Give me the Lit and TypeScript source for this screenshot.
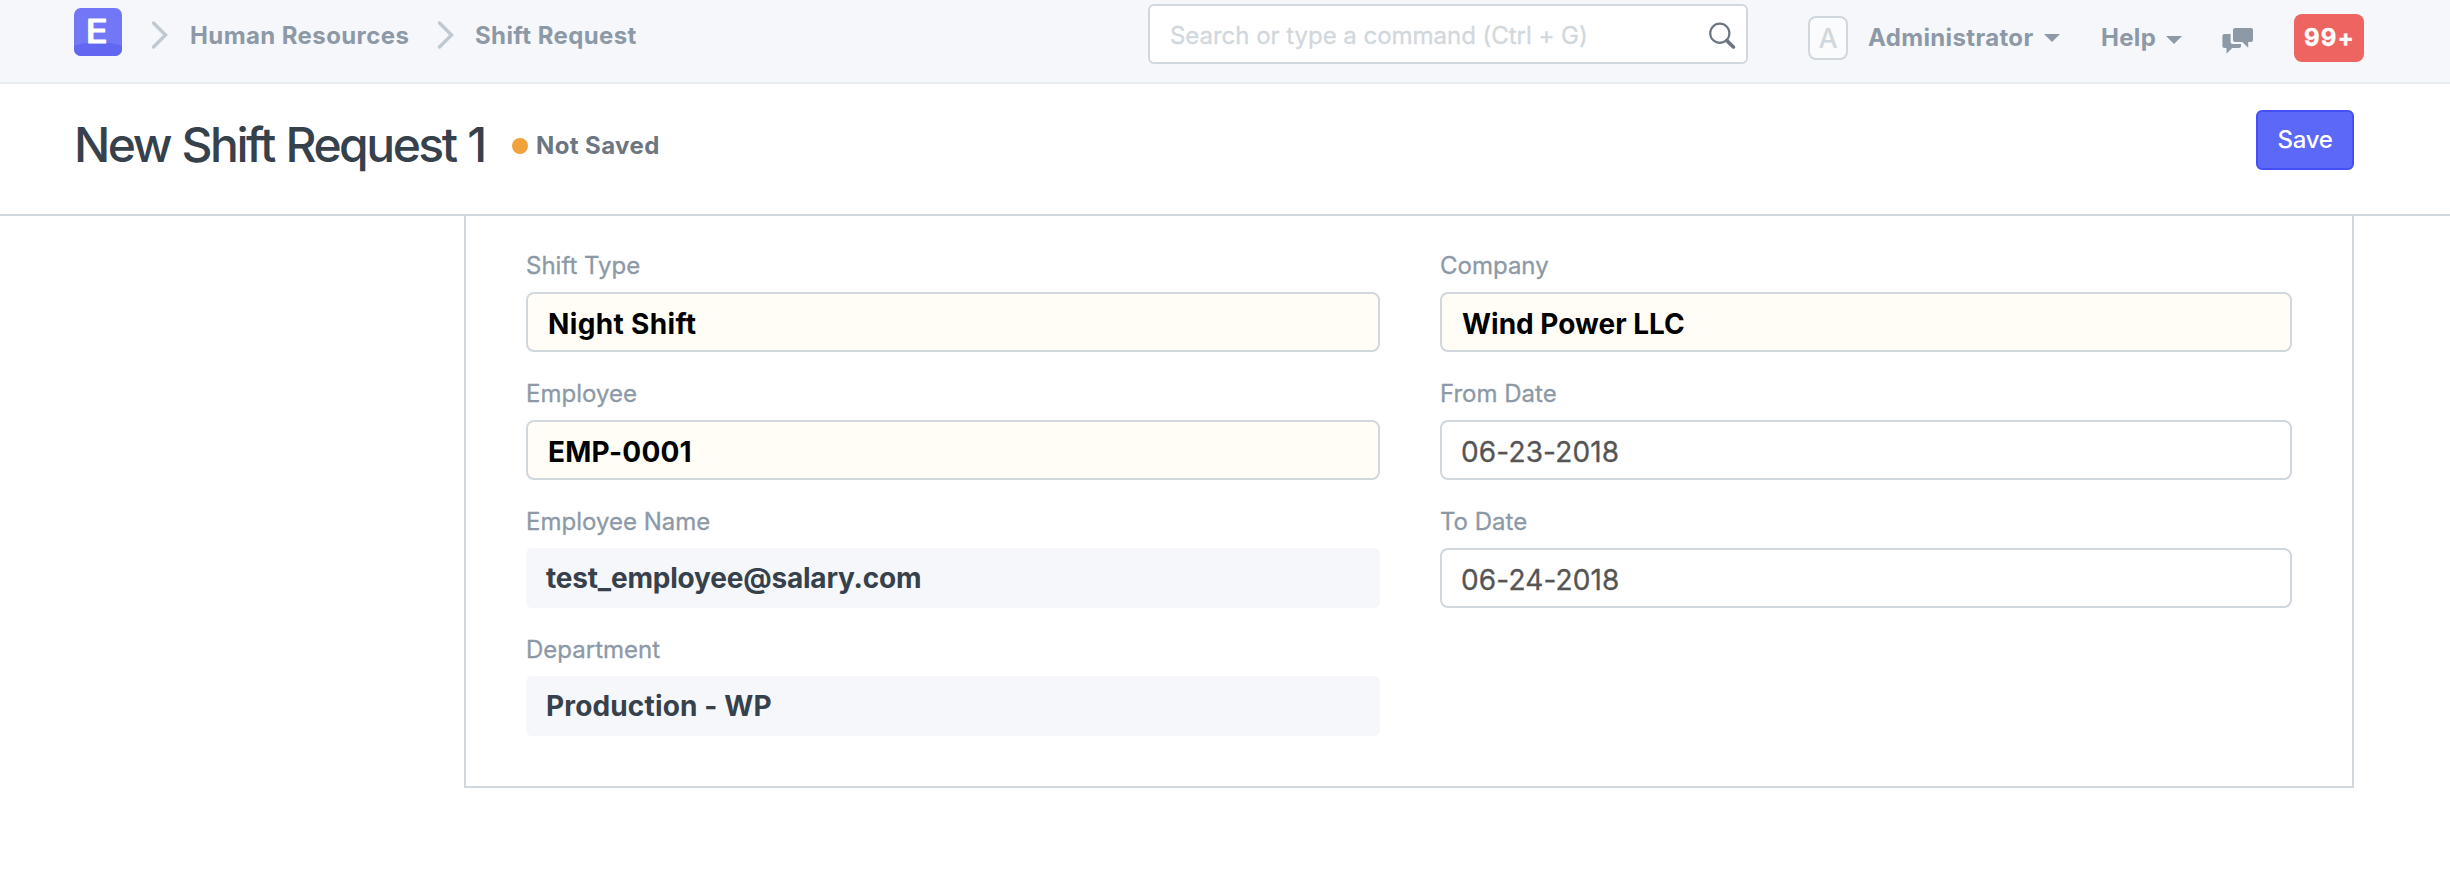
import { LitElement, html, css, svg } from "lit";
import { customElement, property } from "lit/decorators.js";
import { classMap } from "lit/directives/class-map.js";

interface Field {
  label: string;
  value: string;
  kind: "required" | "plain" | "static";
  tracking?: "loose" | "tight" | "slight";
}

const LEFT: Field[] = [
  { label: "Shift Type", value: "Night Shift", kind: "required", tracking: "loose" },
  { label: "Employee", value: "EMP-0001", kind: "required", tracking: "slight" },
  { label: "Employee Name", value: "test_employee@salary.com", kind: "static", tracking: "tight" },
  { label: "Department", value: "Production - WP", kind: "static", tracking: "slight" },
];

const RIGHT: Field[] = [
  { label: "Company", value: "Wind Power LLC", kind: "required" },
  { label: "From Date", value: "06-23-2018", kind: "plain", tracking: "slight" },
  { label: "To Date", value: "06-24-2018", kind: "plain", tracking: "slight" },
];

const chevron = () => html`<svg class="chevron" width="18" height="30" viewBox="0 0 18 30">
  <path d="M2.5 3L14.5 15L2.5 27" fill="none" stroke="#c0c8d0" stroke-width="3.4" stroke-linecap="round"/>
</svg>`;

const caret = () => html`<svg class="caret" width="16" height="8" viewBox="0 0 16 8">
  <path d="M0 0H16L8 8Z" fill="#8d99a6"/>
</svg>`;

@customElement("form-field")
class FormField extends LitElement {
  @property({ attribute: false }) field!: Field;

  static styles = css`
    :host { display: block; height: 128px; }
    .label {
      height: 24px; line-height: 24px; padding-top: 1px; margin-bottom: 15px; box-sizing: border-box;
      font-size: 24px; color: #8d99a6; white-space: nowrap; -webkit-text-stroke: 0.3px currentColor;
    }
    .control {
      box-sizing: border-box; height: 60px; border-radius: 8px;
      font-size: 28px; white-space: nowrap;
    }
    .required, .plain { border: 2px solid #d1d8dd; padding: 4px 20px 0; line-height: 53px; }
    .required { background: #fffdf6; color: #000; font-weight: 700; }
    .plain { background: #fff; color: #555; padding-left: 19px; -webkit-text-stroke: 0.3px currentColor; }
    .static {
      background: #f5f7fa; color: #36414c; font-weight: 700;
      padding: 0 20px; line-height: 60px; border-radius: 6px;
    }
    .loose { letter-spacing: 0.35px; }
    .slight { letter-spacing: 0.15px; }
    .tight { letter-spacing: -0.2px; }
  `;

  render() {
    const f = this.field;
    return html`
      <div class="label">${f.label}</div>
      <div class=${classMap({ control: true, [f.kind]: true, [f.tracking ?? "normal"]: true })}>${f.value}</div>
    `;
  }
}

@customElement("app-root")
class AppRoot extends LitElement {
  static styles = css`
    :host {
      display: block; min-height: 896px; background: #fff;
      font-family: Inter, "Open Sans", sans-serif; color: #36414c;
    }
    * { box-sizing: border-box; }
    svg { display: block; flex: none; }

    .navbar {
      display: flex; align-items: flex-start; height: 84px; padding-left: 74px;
      background: #f5f7fb; border-bottom: 2px solid #ebeef0;
      font-size: 24px; font-weight: 700; letter-spacing: 0.4px; color: #8d99a6; white-space: nowrap;
    }
    .logo { margin-top: 8px; }
    .chevron { margin-top: 20px; }
    .lead { margin-left: 29px; }
    .crumb { margin-top: 21px; line-height: 30px; }
    .home { width: 247px; margin-left: 21px; }
    .current { width: 673px; margin-left: 20px; }

    .search {
      display: flex; justify-content: space-between; width: 600px; height: 60px; margin-top: 4px;
      padding: 1px 10px 0 20px; background: #fff; border: 2px solid #d1d8dd; border-radius: 6px;
      font-weight: 400; letter-spacing: -0.03px; line-height: 57px; color: #d1d8dd;
    }
    .search span { -webkit-text-stroke: 0.3px currentColor; }
    .search svg { margin-top: 14px; }
    .avatar {
      width: 40px; height: 44px; margin: 16px 0 0 60px; border: 2px solid #d1d8dd; border-radius: 8px;
      background: #fafbfc; color: #d1d8dd; font-size: 27px; font-weight: 500; line-height: 41px;
      letter-spacing: 0; text-align: center;
    }
    .user { display: flex; width: 233px; margin: 23px 0 0 20px; line-height: 30px; letter-spacing: 0.35px; }
    .user span { width: 176px; }
    .user .caret { margin-top: 11px; }
    .help { display: flex; width: 121px; margin-top: 23px; line-height: 30px; letter-spacing: 0.3px; }
    .help span { width: 65px; }
    .help .caret { margin-top: 13px; }
    .chat { margin-top: 28px; }
    .count {
      width: 70px; height: 48px; margin: 14px 0 0 40px; border-radius: 8px; background: #ed6460;
      color: #fff; line-height: 48px; letter-spacing: 1.2px; text-align: center; padding-left: 1px;
      -webkit-text-stroke: 0.4px currentColor;
    }

    .page-head {
      display: flex; align-items: flex-start; height: 132px; padding: 0 96px 0 74px;
      border-bottom: 2px solid #d1d8dd; white-space: nowrap;
    }
    .title {
      margin: 31px 0 0; width: 438px; font-size: 48px; font-weight: 500; line-height: 60px;
      letter-spacing: -2.5px; word-spacing: 1.3px;
    }
    .dot { width: 16px; height: 16px; margin-top: 54px; border-radius: 50%; background: #f0a23c; }
    .status { flex: 1; margin: 47px 0 0 8px; font-size: 24px; font-weight: 700; line-height: 30px; letter-spacing: 0.4px; color: #6c7680; }
    .save {
      width: 98px; height: 60px; margin-top: 26px; background: #5c68f7; border: 2px solid #4350fa;
      border-radius: 6px; color: #fff; font-size: 24px; font-weight: 500; line-height: 55px;
      letter-spacing: -0.3px; text-align: center;
    }

    .form {
      display: grid; grid-template-columns: 854px 852px; column-gap: 60px;
      width: 1890px; height: 572px; margin-left: 464px; padding: 37px 60px 0;
      border: 2px solid #d1d8dd; border-top: 0;
    }
  `;

  render() {
    return html`
      <nav class="navbar">
        <svg class="logo" width="48" height="48" viewBox="0 0 48 48">
          <defs><clipPath id="tile"><rect width="48" height="48" rx="7"/></clipPath></defs>
          <g clip-path="url(#tile)">
            <rect width="48" height="48" fill="#7277f8"/>
            <path d="M0 38Q24 30 48 38V48H0Z" fill="#6167f0"/>
          </g>
          <text transform="translate(11.8 35.4) scale(1.14 1)" font-family="Inter, sans-serif" font-size="32"
            font-weight="500" letter-spacing="0" fill="#fff" stroke="#fff" stroke-width="1"
            stroke-linejoin="round">E</text>
        </svg>
        <div class="lead">${chevron()}</div>
        <div class="crumb home">Human Resources</div>
        ${chevron()}
        <div class="crumb current">Shift Request</div>
        <div class="search">
          <span>Search or type a command (Ctrl + G)</span>
          <svg width="28" height="28" viewBox="0 0 28 28">
            <circle cx="11.8" cy="12.3" r="9.6" fill="none" stroke="#6c7680" stroke-width="2.2"/>
            <path d="M18.8 19.6L25.4 26" stroke="#6c7680" stroke-width="3.6" stroke-linecap="round"/>
          </svg>
        </div>
        <div class="avatar">A</div>
        <div class="user"><span>Administrator</span>${caret()}</div>
        <div class="help"><span>Help</span>${caret()}</div>
        <svg class="chat" width="32" height="26" viewBox="0 0 32 26">
          <path fill="#8d99a6" d="M13 0H29a2 2 0 0 1 2 2V12a2 2 0 0 1-2 2H26.2V19.8L20.3 14H13a2 2 0 0 1-2-2V2a2 2 0 0 1 2-2Z"/>
          <path fill="#8d99a6" d="M2.4 6H8.6V14a2 2 0 0 0 2 2H19V18a2 2 0 0 1-2 2H10.2L4.5 25.8V20H2.4a2 2 0 0 1-2-2V8a2 2 0 0 1 2-2Z"/>
        </svg>
        <div class="count">99+</div>
      </nav>
      <header class="page-head">
        <h1 class="title">New Shift Request 1</h1>
        <span class="dot"></span>
        <span class="status">Not Saved</span>
        <div class="save">Save</div>
      </header>
      <main class="form">
        <section>${LEFT.map((f) => html`<form-field .field=${f}></form-field>`)}</section>
        <section>${RIGHT.map((f) => html`<form-field .field=${f}></form-field>`)}</section>
      </main>
    `;
  }
}
